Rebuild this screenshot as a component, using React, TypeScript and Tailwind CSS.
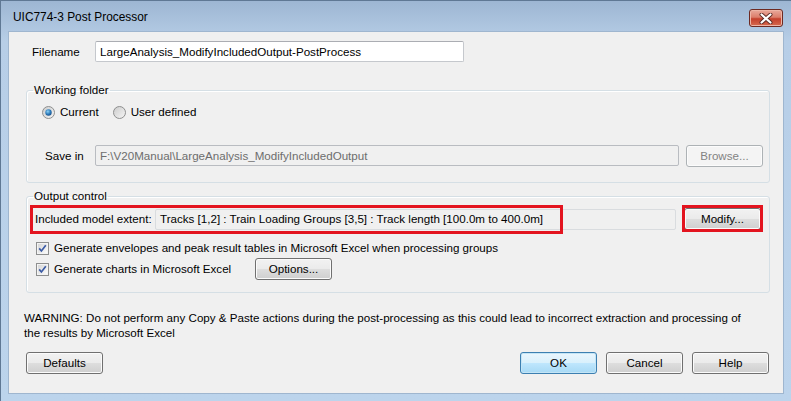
import React from "react";

const FONT = "font-['Liberation_Sans',Arial,sans-serif]";

type BtnProps = {
  children: React.ReactNode;
  className?: string;
  disabled?: boolean;
  primary?: boolean;
};

function Button({ children, className = "", disabled, primary }: BtnProps) {
  let look =
    "border-[#707070] text-black bg-[linear-gradient(to_bottom,#f2f2f2,#ebebeb_48%,#dddddd_52%,#cfcfcf)] shadow-[inset_0_0_0_1px_#fbfbfb]";
  if (disabled)
    look = "border-[#adb2b5] text-[#838383] bg-[#f4f4f4] shadow-[inset_0_0_0_1px_#fcfcfc]";
  if (primary)
    look =
      "border-[#3c7fb1] text-black bg-[linear-gradient(to_bottom,#eaf6fd,#d9f0fc_48%,#bee6fd_52%,#a7d9f5)] shadow-[inset_0_0_0_1px_#c4e5f6]";
  return (
    <div
      className={`flex h-[22px] w-[77px] shrink-0 items-center justify-center whitespace-nowrap rounded-[3px] border ${look} ${className}`}
    >
      {children}
    </div>
  );
}

function Radio({ checked }: { checked?: boolean }) {
  return (
    <svg width="13" height="13" viewBox="0 0 13 13" className="shrink-0">
      <defs>
        <linearGradient id="rb" x1="0" y1="0" x2="1" y2="1">
          <stop offset="0" stopColor="#cbcbcb" />
          <stop offset="1" stopColor="#f6f6f6" />
        </linearGradient>
        <radialGradient id="rd" cx="0.4" cy="0.35" r="0.7">
          <stop offset="0" stopColor="#8bd2f7" />
          <stop offset="0.6" stopColor="#2a78b8" />
          <stop offset="1" stopColor="#1a4f88" />
        </radialGradient>
      </defs>
      <circle cx="6.5" cy="6.5" r="6" fill="url(#rb)" stroke="#8e8f8f" strokeWidth="1" />
      {checked && <circle cx="6.5" cy="6.5" r="3.2" fill="url(#rd)" />}
    </svg>
  );
}

function Check() {
  return (
    <svg width="13" height="13" viewBox="0 0 13 13" className="shrink-0">
      <defs>
        <linearGradient id="cb" x1="0" y1="0" x2="1" y2="1">
          <stop offset="0" stopColor="#d6d6d6" />
          <stop offset="1" stopColor="#fbfbfb" />
        </linearGradient>
      </defs>
      <rect x="0.5" y="0.5" width="12" height="12" fill="#f4f4f4" stroke="#8e8f8f" />
      <rect x="2" y="2" width="9" height="9" fill="url(#cb)" />
      <path d="M3.2 6.4 L5.4 9 L9.8 3.3" fill="none" stroke="#3b5ba5" strokeWidth="1.7" />
    </svg>
  );
}

function CloseButton() {
  return (
    <div className="flex h-[18px] w-[34px] items-center justify-center rounded-[3px] border border-[#6d2a22] bg-[linear-gradient(to_bottom,#e9a99b,#dc7e6b_45%,#c4402c_55%,#d66a4f)] shadow-[inset_0_0_0_1px_#eeb5a6]">
      <svg width="14" height="11" viewBox="0 0 14 11">
        <path d="M2.5 1.5 L11.5 9.5 M11.5 1.5 L2.5 9.5" stroke="#5a2a24" strokeWidth="4" strokeLinecap="round" />
        <path d="M2.5 1.5 L11.5 9.5 M11.5 1.5 L2.5 9.5" stroke="#ffffff" strokeWidth="2.2" strokeLinecap="round" />
      </svg>
    </div>
  );
}

export default function App() {
  return (
    <div
      className={`${FONT} flex h-[401px] w-[791px] flex-col overflow-hidden border-l border-t border-[#5f7894] bg-[linear-gradient(to_bottom,#9db6d3,#b7cee7_40px,#bcd4ec)] text-[11.6px] text-black`}
    >
      <div className="flex h-[30px] shrink-0 items-center justify-between pl-[12px] pr-[8px] pt-[4px]">
        <span className="text-[11.9px] text-black">UIC774-3 Post Processor</span>
        <CloseButton />
      </div>

      <div className="mx-[7px] flex h-[363px] shrink-0 flex-col whitespace-nowrap border border-[#9fb6cf] bg-[#f0f0f0]">
        <div className="mt-[9px] flex h-[21px] items-center">
          <span className="w-[86px] pl-[23px]">Filename</span>
          <div className="flex h-[21px] w-[369px] items-center rounded-[2px] border border-[#c5c8cd] border-t-[#abadb3] bg-white pl-[4px]">
            LargeAnalysis_ModifyIncludedOutput-PostProcess
          </div>
        </div>

        <fieldset className="ml-[17px] mt-[21px] w-[744px] rounded-[3px] border border-[#d5dfe5] pb-[16px] pl-[6px] shadow-[inset_1px_1px_0_#ffffff]">
          <legend className="px-[1px] leading-[14px]">Working folder</legend>
          <div className="mt-[8px] flex h-[14px] items-center">
            <div className="ml-[9px] flex items-center gap-[5px]">
              <Radio checked />
              <span>Current</span>
            </div>
            <div className="ml-[14px] flex items-center gap-[5px]">
              <Radio />
              <span>User defined</span>
            </div>
          </div>
          <div className="mt-[26px] flex h-[21px] items-center">
            <span className="w-[62px] pl-[12px]">Save in</span>
            <div className="flex h-[21px] w-[584px] items-center rounded-[2px] border border-[#b9bcc1] bg-[#f0f0f0] pl-[4px] text-[#6d6d6d]">
              F:\V20Manual\LargeAnalysis_ModifyIncludedOutput
            </div>
            <Button disabled className="ml-[7px]">
              Browse...
            </Button>
          </div>
        </fieldset>

        <fieldset className="ml-[17px] mt-[6px] w-[744px] rounded-[3px] border border-[#d5dfe5] pb-[12px] pl-[6px] shadow-[inset_1px_1px_0_#ffffff]">
          <legend className="px-[1px] leading-[14px]">Output control</legend>
          <div className="relative mt-[5px] flex h-[22px] items-center">
            <span className="w-[122px] pl-[2px]">Included model extent:</span>
            <div className="flex h-[21px] w-[521px] items-center rounded-[2px] border border-[#d9dcdf] bg-[#f0f0f0] pl-[4px]">
              Tracks [1,2] : Train Loading Groups [3,5] : Track length [100.0m to 400.0m]
            </div>
            <Button className="ml-[8px] w-[73px]">Modify...</Button>
            <div className="absolute left-[-3px] top-[-3px] h-[29px] w-[533px] border-[3px] border-[#e3141f]" />
            <div className="absolute left-[649px] top-[-3px] h-[27px] w-[81px] border-[3px] border-[#e3141f]" />
          </div>
          <div className="mt-[11px] flex h-[14px] items-center gap-[5px] pl-[3px]">
            <Check />
            <span>Generate envelopes and peak result tables in Microsoft Excel when processing groups</span>
          </div>
          <div className="mt-[3px] flex h-[22px] items-center pl-[3px]">
            <Check />
            <span className="ml-[5px] w-[201px]">Generate charts in Microsoft Excel</span>
            <Button className="w-[76px]">Options...</Button>
          </div>
        </fieldset>

        <p className="ml-[15px] mt-[17px] leading-[15px]">
          WARNING: Do not perform any Copy &amp; Paste actions during the post-processing as this could lead to
          incorrect extraction and processing of
          <br />
          the results by Microsoft Excel
        </p>

        <div className="ml-[17px] mt-[12px] flex items-center">
          <Button>Defaults</Button>
          <div className="ml-[417px] flex gap-[9px]">
            <Button primary>OK</Button>
            <Button>Cancel</Button>
            <Button className="w-[76px]">Help</Button>
          </div>
        </div>
      </div>
    </div>
  );
}
